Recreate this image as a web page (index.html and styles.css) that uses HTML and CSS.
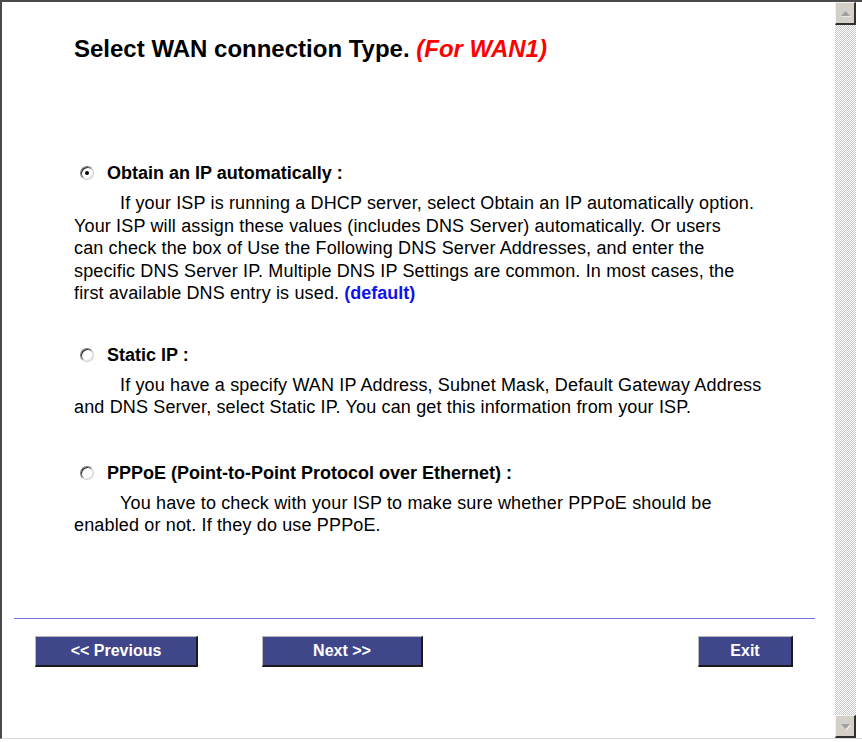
FILE: index.html
```html
<!DOCTYPE html>
<html>
<head>
  <title>WAN Connection Type</title>
  <link rel="stylesheet" href="styles.css">
</head>

<body>
  <div class="window">
    <div class="content">
      <p class="title">Select WAN connection Type. <span class="wan-tag">(For WAN1)</span></p>

      <div class="option first-option">
        <div class="option-label">
          <span class="radio checked"></span>
          <span>Obtain an IP automatically :</span>
        </div>
        <p class="option-text">
          If your ISP is running a DHCP server, select Obtain an IP automatically option.<br>
          Your ISP will assign these values (includes DNS Server) automatically. Or users<br>
          can check the box of Use the Following DNS Server Addresses, and enter the<br>
          specific DNS Server IP. Multiple DNS IP Settings are common. In most cases, the<br>
          first available DNS entry is used. <span class="default-tag">(default)</span>
        </p>
      </div>

      <div class="option">
        <div class="option-label">
          <span class="radio"></span>
          <span>Static IP :</span>
        </div>
        <p class="option-text">
          If you have a specify WAN IP Address, Subnet Mask, Default Gateway Address<br>
          and DNS Server, select Static IP. You can get this information from your ISP.
        </p>
      </div>

      <div class="option last-option">
        <div class="option-label">
          <span class="radio"></span>
          <span>PPPoE (Point-to-Point Protocol over Ethernet) :</span>
        </div>
        <p class="option-text">
          You have to check with your ISP to make sure whether PPPoE should be<br>
          enabled or not. If they do use PPPoE.
        </p>
      </div>

      <div class="footer">
        <div class="divider"></div>
        <div class="button-row">
          <button class="nav-button prev-button">&lt;&lt; Previous</button>
          <button class="nav-button next-button">Next &gt;&gt;</button>
          <button class="nav-button exit-button">Exit</button>
        </div>
      </div>
    </div>

    <div class="scrollbar">
      <div class="scroll-button">
        <svg width="11" height="7" viewBox="0 0 11 7"><path d="M1 6 L5.5 1 L10 6 Z" fill="#a0a0a0"/><path d="M1 7 H11" stroke="#fff" stroke-width="1"/></svg>
      </div>
      <div class="scroll-track"></div>
      <div class="scroll-button">
        <svg width="11" height="7" viewBox="0 0 11 7"><path d="M1 1 L5.5 6 L10 1 Z" fill="#a0a0a0"/><path d="M6 7 L11 1.5" stroke="#fff" stroke-width="1"/></svg>
      </div>
    </div>
  </div>
</body>
</html>
```

FILE: styles.css
```css
body {
  margin: 0;
  padding: 0;
  background-color: #ffffff;
}

.window {
  display: flex;
  width: 860px;
  height: 736px;
  border-top: 2px solid #4a4a4a;
  border-left: 2px solid #4a4a4a;
  border-bottom: 1px solid #d8d8d8;
}

.content {
  flex: 1;
  overflow: hidden;
  font-family: 'Liberation Sans', Arial, sans-serif;
  color: #000000;
}

.title {
  font-size: 24px;
  font-weight: bold;
  line-height: 28px;
  margin: 33px 0 0 72px;
}

.wan-tag {
  color: #ff0000;
  font-style: italic;
}

.option {
  margin: 39px 0 0 72px;
}

.first-option {
  margin-top: 99px;
}

.last-option {
  margin-top: 43px;
}

.option-label {
  display: flex;
  align-items: center;
  gap: 13px;
  padding-left: 6px;
  font-size: 18px;
  font-weight: bold;
  line-height: 22px;
}

.radio {
  position: relative;
  box-sizing: border-box;
  width: 14px;
  height: 14px;
  border-radius: 50%;
  border: 1px solid;
  border-color: #7a7a7a #d0d0d0 #d0d0d0 #7a7a7a;
  box-shadow: inset 1px 1px 0 #2a2a2a, inset -1px -1px 0 #ececec;
  background-color: #ffffff;
}

.radio.checked::after {
  content: '';
  position: absolute;
  left: 4px;
  top: 4px;
  width: 4px;
  height: 4px;
  border-radius: 50%;
  background-color: #000000;
}

.option-text {
  margin: 8px 0 0 0;
  font-size: 18px;
  line-height: 22.5px;
  letter-spacing: 0.15px;
  text-indent: 46px;
  white-space: nowrap;
}

.default-tag {
  color: #1010f0;
  font-weight: bold;
  letter-spacing: 0;
}

.footer {
  margin: 81px 20px 0 12px;
}

.divider {
  border-top: 1px solid #7474e0;
}

.button-row {
  display: flex;
  gap: 64px;
  padding: 17px 22px 0 21px;
}

.nav-button {
  height: 31px;
  background-color: #3f478a;
  color: #ffffff;
  font-family: 'Liberation Sans', Arial, sans-serif;
  font-size: 16px;
  font-weight: bold;
  border-style: solid;
  border-width: 1px 2px 2px 1px;
  border-color: #b8b8b8 #1a1a1a #1a1a1a #b8b8b8;
  padding: 0;
}

.prev-button {
  width: 163px;
}

.next-button {
  width: 161px;
}

.exit-button {
  width: 95px;
  margin-left: auto;
}

.scrollbar {
  display: flex;
  flex-direction: column;
  width: 21px;
  margin-right: 6px;
}

.scroll-button {
  box-sizing: border-box;
  height: 23px;
  display: flex;
  align-items: center;
  justify-content: center;
  background-color: #d4d0c8;
  border-style: solid;
  border-width: 1px 2px 2px 1px;
  border-color: #f4f4f4 #303030 #303030 #f4f4f4;
}

.scroll-track {
  flex: 1;
  background: repeating-conic-gradient(#c8c8c8 0 25%, #ffffff 0 50%) 0 0 / 2px 2px;
}
```
